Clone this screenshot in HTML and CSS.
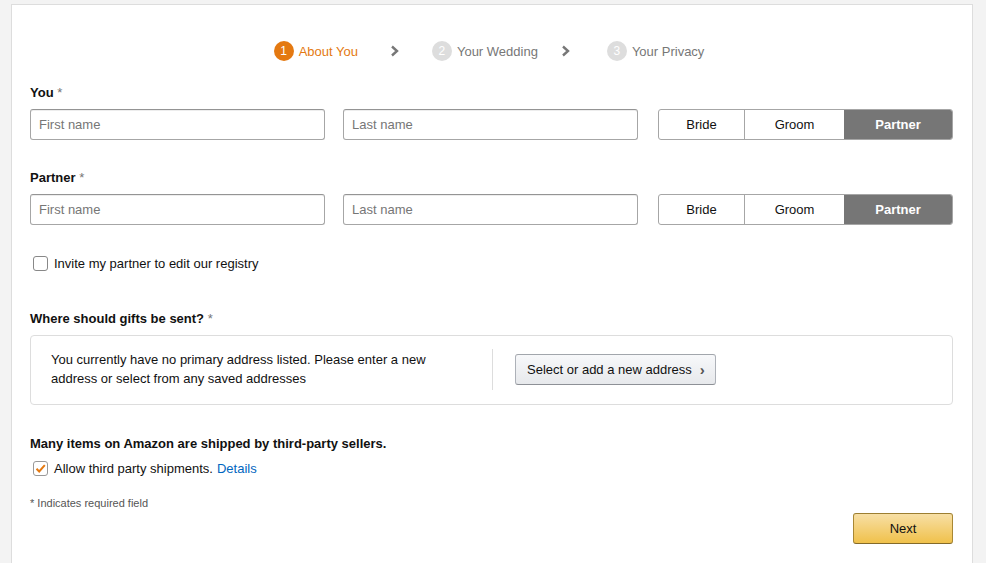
FILE: index.html
```html
<!DOCTYPE html>
<html lang="en">
<head>
    <meta charset="UTF-8">
    <title>Create your registry</title>
    <link rel="stylesheet" href="styles.css">
</head>
<body>
    <div class="panel">
        <div class="steps">
            <div class="step active"><span class="num">1</span>About You</div>
            <svg class="chev" width="10" height="12" viewBox="0 0 10 12"><path d="M2 1.5 L7 6 L2 10.5" fill="none" stroke="#777" stroke-width="2.4"/></svg>
            <div class="step"><span class="num">2</span>Your Wedding</div>
            <svg class="chev chev-2" width="10" height="12" viewBox="0 0 10 12"><path d="M2 1.5 L7 6 L2 10.5" fill="none" stroke="#777" stroke-width="2.4"/></svg>
            <div class="step"><span class="num">3</span>Your Privacy</div>
        </div>

        <div class="label first">You <span class="req">*</span></div>
        <div class="name-row">
            <input type="text" placeholder="First name">
            <input type="text" placeholder="Last name">
            <div class="toggle">
                <div class="opt bride">Bride</div>
                <div class="opt groom">Groom</div>
                <div class="opt selected">Partner</div>
            </div>
        </div>

        <div class="label partner">Partner <span class="req">*</span></div>
        <div class="name-row">
            <input type="text" placeholder="First name">
            <input type="text" placeholder="Last name">
            <div class="toggle">
                <div class="opt bride">Bride</div>
                <div class="opt groom">Groom</div>
                <div class="opt selected">Partner</div>
            </div>
        </div>

        <div class="check-row invite">
            <span class="box"></span>
            Invite my partner to edit our registry
        </div>

        <div class="label gifts">Where should gifts be sent? <span class="req">*</span></div>
        <div class="address">
            <div class="address-text">You currently have no primary address listed. Please enter a new address or select from any saved addresses</div>
            <div class="address-action">
                <button class="select-btn">Select or add a new address <span class="small-chev">&rsaquo;</span></button>
            </div>
        </div>

        <div class="label sellers">Many items on Amazon are shipped by third-party sellers.</div>
        <div class="check-row allow">
            <span class="box checked"><svg width="13" height="13" viewBox="0 0 13 13"><path d="M2.5 6.8 L5.2 9.5 L10.8 3.2" fill="none" stroke="#e47911" stroke-width="2"/></svg></span>
            Allow third party shipments. <a href="#" class="details">Details</a>
        </div>

        <div class="footnote">* Indicates required field</div>
        <div class="actions">
            <button class="next-btn">Next</button>
        </div>
    </div>
</body>
</html>
```

FILE: styles.css
```css
body {
    margin: 0;
    background-color: #f3f3f3;
    font-family: 'Liberation Sans', Arial, sans-serif;
    font-size: 13px;
    color: #111;
}
.panel {
    margin: 4px 0 0 11px;
    width: 962px;
    height: 580px;
    box-sizing: border-box;
    background-color: #fff;
    border: 1px solid #ddd;
    padding: 0 19px 0 18px;
}
.steps {
    display: flex;
    align-items: center;
    justify-content: center;
    margin-top: 36px;
    height: 20px;
    font-size: 13px;
    color: #777;
    padding-right: 5px;
}
.step {
    display: flex;
    align-items: center;
}
.num {
    display: inline-block;
    width: 20px;
    height: 20px;
    line-height: 20px;
    border-radius: 50%;
    background-color: #ddd;
    color: #fff;
    text-align: center;
    font-size: 12px;
    margin-right: 5px;
}
.step.active {
    color: #e47911;
}
.step.active .num {
    background-color: #e47911;
}
.chev {
    margin: 0 32px 0 32px;
}
.chev-2 {
    margin: 0 36px 0 23px;
}
.label {
    font-weight: bold;
    line-height: 16px;
    margin-bottom: 8px;
}
.req {
    font-weight: normal;
    color: #767676;
}
.label.first {
    margin-top: 24px;
}
.label.partner {
    margin-top: 30px;
}
.name-row {
    display: grid;
    grid-template-columns: 295px 295px 1fr;
    column-gap: 18px;
}
.name-row .toggle {
    margin-left: 2px;
}
.name-row input {
    height: 31px;
    box-sizing: border-box;
    border: 1px solid #a6a6a6;
    border-top-color: #949494;
    border-radius: 3px;
    padding: 0 8px;
    font-family: inherit;
    font-size: 13px;
    color: #111;
    box-shadow: 0 1px 0 rgba(0, 0, 0, 0.07) inset;
}
.name-row input::placeholder {
    color: #767676;
}
.toggle {
    display: flex;
    height: 31px;
    box-sizing: border-box;
    border: 1px solid #a6a6a6;
    border-radius: 3px;
    overflow: hidden;
}
.opt {
    display: flex;
    align-items: center;
    justify-content: center;
    color: #111;
}
.opt.bride {
    width: 85px;
    border-right: 1px solid #a6a6a6;
}
.opt.groom {
    width: 99px;
}
.opt.selected {
    flex: 1;
    background-color: #767676;
    color: #fff;
    font-weight: bold;
}
.check-row {
    display: flex;
    align-items: center;
    height: 16px;
    padding-left: 3px;
}
.check-row.invite {
    margin-top: 30px;
}
.box {
    display: inline-flex;
    align-items: center;
    justify-content: center;
    width: 15px;
    height: 15px;
    box-sizing: border-box;
    border: 1px solid #888;
    border-radius: 3px;
    background-color: #fff;
    margin-right: 6px;
}
.box.checked {
    border-color: #999;
}
.label.gifts {
    margin-top: 40px;
    margin-bottom: 8px;
}
.address {
    display: flex;
    align-items: center;
    height: 70px;
    box-sizing: border-box;
    border: 1px solid #ddd;
    border-radius: 4px;
    padding-bottom: 2px;
}
.address-text {
    width: 421px;
    padding: 0 20px 0 20px;
    line-height: 19px;
    color: #111;
}
.address-action {
    border-left: 1px solid #ddd;
    padding: 5px 0 5px 22px;
}
.select-btn {
    display: flex;
    align-items: center;
    white-space: nowrap;
    width: 201px;
    height: 31px;
    box-sizing: border-box;
    border: 1px solid #adb1b8;
    border-top-color: #a2a6ac;
    border-bottom-color: #8d9096;
    border-radius: 3px;
    background: linear-gradient(to bottom, #f7f8fa, #e7e9ec);
    font-family: inherit;
    font-size: 13px;
    color: #111;
    padding: 0 11px;
}
.small-chev {
    margin-left: 8px;
    font-size: 15px;
    font-weight: bold;
    color: #555;
}
.label.sellers {
    margin-top: 31px;
    margin-bottom: 8px;
}
.details {
    color: #0066c0;
    text-decoration: none;
    margin-left: 4px;
}
.footnote {
    margin-top: 20px;
    font-size: 11px;
    line-height: 14px;
    color: #555;
}
.actions {
    display: flex;
    justify-content: flex-end;
    margin-top: 3px;
}
.next-btn {
    width: 100px;
    height: 31px;
    border: 1px solid #a88734;
    border-top-color: #9c7e31;
    border-bottom-color: #846a29;
    border-radius: 3px;
    background: linear-gradient(to bottom, #f7dfa5, #f0c14b);
    font-family: inherit;
    font-size: 13px;
    color: #111;
}
```
